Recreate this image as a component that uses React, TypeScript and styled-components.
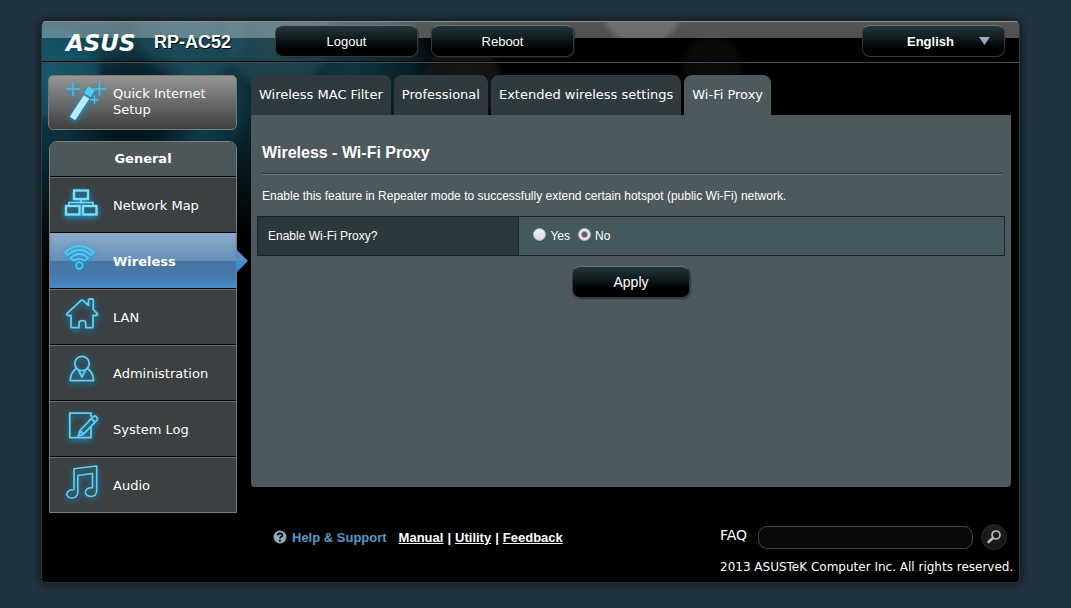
import React, { useState } from "react";
import styled, { createGlobalStyle, css } from "styled-components";

const sans = `"Liberation Sans", Arial, sans-serif`;
const wide = `"DejaVu Sans", Verdana, sans-serif`;

const GlobalStyle = createGlobalStyle`
  * { box-sizing: border-box; }
  body {
    margin: 0;
    min-height: 100vh;
    background: #21333e;
    color: #fff;
    font-family: ${sans};
    font-size: 12px;
  }
  a { color: inherit; }
  button, input, select { font-family: inherit; color: inherit; }
`;

const Page = styled.div`
  padding: 21px 51px 25px 41px;
`;

const Frame = styled.div`
  border: 1px solid #30393e;
  border-top-color: #8b9092;
  border-radius: 5px;
  overflow: hidden;
  box-shadow: 0 0 10px 1px #0c151b;
  background:
    radial-gradient(circle at 10px 50px, rgba(26, 98, 118, 0.75) 0, rgba(20, 84, 102, 0.7) 42px, transparent 52px),
    radial-gradient(circle at 90px 92px, rgba(4, 14, 20, 0.85) 0, rgba(4, 14, 20, 0.7) 34px, transparent 70px),
    radial-gradient(circle at 150px 4px, rgba(40, 92, 106, 0.6) 0, rgba(34, 84, 98, 0.5) 50px, transparent 60px),
    radial-gradient(circle at 235px 14px, rgba(52, 92, 100, 0.6) 0, rgba(36, 80, 90, 0.55) 48px, transparent 58px),
    radial-gradient(circle at 150px 84px, rgba(20, 80, 96, 0.7) 0, rgba(14, 60, 72, 0.5) 50px, transparent 62px),
    radial-gradient(circle at 310px 50px, rgba(20, 64, 78, 0.7) 0, rgba(14, 50, 62, 0.5) 60px, transparent 84px),
    radial-gradient(circle at 420px 62px, #181818 0, #121212 36px, transparent 44px),
    radial-gradient(circle at 670px 44px, #0d0d0d 0, #090909 26px, transparent 34px),
    radial-gradient(ellipse 400px 240px at 20px 0, #12414f 0, #0c303b 50%, transparent 100%),
    #000;
`;

const Header = styled.header`
  display: flex;
  align-items: center;
  height: 41px;
  padding: 0 14px 2px 24px;
  border-bottom: 1px solid #3d4c55;
  box-shadow: inset 0 -1px #05090b;
  background:
    radial-gradient(circle at 600px -16px, rgba(255, 255, 255, 0.16) 0 36px, transparent 44px) 0 0 / 100% 16px no-repeat,
    linear-gradient(rgba(255, 255, 255, 0.33), rgba(255, 255, 255, 0.31)) 0 0 / 100% 16px no-repeat;
`;

const Brand = styled.span`
  width: 88px;
  padding-top: 3px;
  font: italic bold 23px/24px ${wide};
  color: #fff;
`;

const Model = styled.h1`
  width: 121px;
  margin: 0;
  padding-top: 2px;
  font-size: 18px;
  line-height: 24px;
  text-shadow: 1px 1px 0 #000;
`;

const glossy = css`
  border: 1px solid #333b3e;
  border-top-color: #6b7376;
  border-radius: 8px;
  background: linear-gradient(#23353b 0, #152328 30%, #000 75%);
  box-shadow: 1px 1px 1px rgba(30, 38, 40, 0.6);
  color: #fff;
`;

const PushButton = styled.button<{ $size?: "small" | "large" }>`
  ${glossy}
  width: ${(p) => (p.$size === "small" ? 118 : 143)}px;
  height: 32px;
  padding: 0;
  font-size: ${(p) => (p.$size === "small" ? 14 : 13)}px;
  cursor: pointer;
`;

const HeaderActions = styled.div`
  display: flex;
  flex: 1;
  gap: 13px;
`;

const Language = styled.label`
  position: relative;
  display: block;
`;

const LanguageSelect = styled.select`
  ${glossy}
  appearance: none;
  width: 143px;
  height: 32px;
  padding: 0 40px 0 44px;
  box-shadow: none;
  font-size: 13px;
  font-weight: bold;
`;

const LanguageArrow = styled.svg`
  position: absolute;
  right: 15px;
  top: 12px;
  pointer-events: none;
`;

const Body = styled.div`
  display: flex;
  align-items: flex-start;
  gap: 14px;
  padding: 12px 8px 0 6px;
`;

const Sidebar = styled.aside`
  width: 189px;
  flex: none;
`;

const QuickSetup = styled.a`
  display: flex;
  align-items: center;
  gap: 7px;
  height: 55px;
  margin-bottom: 11px;
  padding: 0 0 2px 13px;
  border: 1px solid #777;
  border-radius: 5px;
  background: linear-gradient(#969696, #6a6a6a 50%, #3f3f3f);
  font: 13px/16px ${wide};
  text-decoration: none;
`;

const Menu = styled.nav`
  margin-left: 1px;
  border: 1px solid #7b7f80;
  border-radius: 8px 8px 0 0;
`;

const MenuTitle = styled.h2`
  margin: 0;
  height: 34px;
  border-radius: 7px 7px 0 0;
  background: #4d5659;
  font: bold 13px/34px ${wide};
  text-align: center;
`;

const MenuItem = styled.a<{ $active?: boolean }>`
  position: relative;
  display: flex;
  align-items: center;
  gap: 11px;
  height: 56px;
  padding: 2px 0 0 12px;
  border-top: 1px solid #000;
  background: #3b4042;
  box-shadow: inset 0 1px #696d6e;
  font: 13px/16px ${wide};
  text-decoration: none;
  ${(p) =>
    p.$active &&
    css`
      font-weight: bold;
      background: linear-gradient(#8dabc9, #6690b9 50%, #4674a2 50%, #4b7bad);
      box-shadow: inset 0 -10px 10px -5px #4290d0;
      &::after {
        content: "";
        position: absolute;
        left: 100%;
        top: 16px;
        width: 12px;
        height: 24px;
        background: linear-gradient(#5d8fc0 50%, #3f8dce 50%);
        clip-path: polygon(0 0, 100% 50%, 0 100%);
      }
    `}
`;

const GlowIcon = styled.svg`
  flex: none;
  fill: none;
  stroke: #5fd0f2;
  stroke-width: 1.8;
  stroke-linejoin: round;
  stroke-linecap: round;
  filter: drop-shadow(0 2px 3px #0f9ad6);
`;

const Main = styled.main`
  flex: 1;
  min-width: 0;
`;

const Tabs = styled.nav`
  display: flex;
  gap: 3px;
`;

const Tab = styled.a<{ $active?: boolean }>`
  height: 40px;
  padding: 0 8px;
  border-radius: 8px 8px 0 0;
  background: ${(p) => (p.$active ? "#4d595d" : "#2f3a3e")};
  font: 13px/39px ${wide};
  text-decoration: none;
  white-space: nowrap;
`;

const Panel = styled.section`
  min-height: 372px;
  padding: 28px 6px;
  border-radius: 0 0 4px 4px;
  background: #4d595d;
`;

const PanelTitle = styled.h2`
  margin: 0 3px 0 5px;
  padding-bottom: 11px;
  border-bottom: 1px solid #2f3a3e;
  box-shadow: 0 1px #6c7e84;
  font-size: 16px;
  line-height: 19px;
`;

const Note = styled.p`
  margin: 14px 5px 12px;
  line-height: 16px;
`;

const Settings = styled.table`
  width: 100%;
  height: 40px;
  border-collapse: collapse;
  th,
  td {
    padding: 0 10px;
    border: 1px solid #1d2426;
    text-align: left;
    font-weight: normal;
  }
  th {
    width: 35%;
    background: #2d383d;
  }
  td {
    padding-left: 14px;
    background: #44585d;
  }
`;

const RadioGroup = styled.div`
  display: flex;
  gap: 8px;
`;

const RadioLabel = styled.label`
  display: flex;
  align-items: center;
  gap: 4px;
`;

const Radio = styled.input`
  appearance: none;
  width: 13px;
  height: 13px;
  margin: 0 0 4px;
  border: 1px solid #b0b0b0;
  border-radius: 50%;
  background: linear-gradient(#f2f2f2, #d9d9d9);
  &:checked {
    background: radial-gradient(circle, #5a5a5a 0 2px, #e6e6e6 4px);
  }
`;

const Actions = styled.div`
  display: flex;
  justify-content: center;
  padding-top: 10px;
`;

const Footer = styled.footer`
  display: flex;
  justify-content: space-between;
  padding: 11px 12px 7px 231px;
`;

const Support = styled.div`
  display: flex;
  align-items: center;
  height: 26px;
  font-size: 13px;
  font-weight: bold;
`;

const SupportTitle = styled.span`
  margin: 0 12px 0 5px;
  color: #569ac7;
`;

const SupportLinks = styled.span`
  display: flex;
  gap: 4px;
`;

const Legal = styled.div`
  width: 287px;
`;

const Search = styled.form`
  display: flex;
  align-items: center;
  height: 26px;
`;

const SearchLabel = styled.label`
  flex: 1;
  padding-bottom: 4px;
  font: 14px/16px ${wide};
`;

const SearchInput = styled.input`
  width: 215px;
  height: 23px;
  margin-right: 8px;
  padding: 0 10px;
  border: 1px solid #444;
  border-radius: 9px;
  background: #090909;
`;

const SearchButton = styled.button`
  display: grid;
  place-items: center;
  width: 26px;
  height: 26px;
  padding: 0;
  border: 1px solid #292929;
  border-radius: 50%;
  background: linear-gradient(#202020, #151515);
`;

const Copyright = styled.p`
  margin: 9px 0 0;
  font: 12px/16px ${wide};
  white-space: nowrap;
`;

const icons: Record<string, React.ReactNode> = {
  "Network Map": (
    <g strokeWidth="2.4" strokeLinejoin="miter" stroke="#7fdcf5" fill="#23647c">
      <path d="M19 15v4M7 21v-2.500h24V21" strokeWidth="1.600" fill="none" />
      <rect x="12" y="6.500" width="14" height="8.500" />
      <rect x="4" y="22" width="13.500" height="8.500" />
      <rect x="21" y="22" width="13.500" height="8.500" />
    </g>
  ),
  Wireless: (
    <g strokeWidth="1.700" stroke="#4fcaf3">
      <path d="M3 12.500Q17.300 -0.500 31.700 12.500L29 15Q17.300 5 5.500 15Z" />
      <path d="M8.500 18Q17.300 10 26.200 18L22.500 20.800Q17.300 16.800 12 20.800Z" />
      <circle cx="17.300" cy="25.500" r="3.300" />
    </g>
  ),
  LAN: (
    <path d="M9 19.500H6Q4 19 5.200 17.300L18.500 4.800Q20 3.400 21.500 4.800L26.500 9.300V4Q26.800 3 28 3H30Q31.300 3 31.300 4.200V13.600L35.200 17.300Q36.300 19 34.300 19.500H31V30Q31 31.700 29.500 31.700H23.700V27Q23.700 24.700 20.300 24.700T17 27V31.700H10.500Q9 31.700 9 30Z" />
  ),
  Administration: (
    <g>
      <circle cx="20" cy="11.500" r="7.200" />
      <path d="M14.500 16.500Q8.300 20.500 8.300 28.700H31.500Q31.500 20.500 25.500 16.500M16.500 18L19.900 25L23.500 18" />
    </g>
  ),
  "System Log": (
    <g strokeLinejoin="miter">
      <path d="M29 8V5.200H7.800V29.600H29V19" />
      <path d="M16.500 27.800L18 22.500L31.500 8.500Q32.700 7.500 34 8.500L35.300 10Q36 11.200 35 12.200L21.500 26.200ZM18 22.500L21.500 26.200M29.500 10.700L33 14.200" />
    </g>
  ),
  Audio: (
    <path
      strokeWidth="1.600"
      d="M12 24.500V4.700L34.700 2V26.500Q34.500 32.500 28.800 32.500Q23.500 32 23.300 28Q24 23.300 30.500 23.800V9.500L15.800 11.500V28Q15.500 34 9.500 34Q5 33.500 4.800 30Q5.500 25.500 12 25.700"
    />
  ),
};

const menuItems = ["Network Map", "Wireless", "LAN", "Administration", "System Log", "Audio"];
const tabs = ["Wireless MAC Filter", "Professional", "Extended wireless settings", "Wi-Fi Proxy"];

export default function App() {
  const [proxy, setProxy] = useState("No");

  return (
    <>
      <GlobalStyle />
      <Page>
        <Frame>
          <Header>
            <Brand>ASUS</Brand>
            <Model>RP-AC52</Model>
            <HeaderActions>
              <PushButton type="button">Logout</PushButton>
              <PushButton type="button">Reboot</PushButton>
            </HeaderActions>
            <Language>
              <LanguageSelect aria-label="Language" defaultValue="English">
                <option>English</option>
              </LanguageSelect>
              <LanguageArrow width="11" height="8" viewBox="0 0 11 8" aria-hidden="true">
                <path d="M0 0H11L5.500 8Z" fill="#93adbf" />
              </LanguageArrow>
            </Language>
          </Header>

          <Body>
            <Sidebar>
              <QuickSetup href="#setup">
                <GlowIcon width="44" height="44" viewBox="0 0 44 44" aria-hidden="true">
                  <path d="M11 2.500V15.500M4.500 9H17.500M37.500 2.500V15M31 9H43.500M32.500 16V23.500M28.700 19.700H36" stroke="#45c3ec" strokeWidth="1.400" />
                  <path d="M24.500 17L10.500 38.500" stroke="#b5ecfb" strokeWidth="6.500" strokeLinecap="butt" />
                  <path d="M29.500 8.500L25.500 15" stroke="#4fd0f7" strokeWidth="7.500" strokeLinecap="butt" />
                </GlowIcon>
                <span>
                  Quick Internet
                  <br />
                  Setup
                </span>
              </QuickSetup>
              <Menu aria-label="General">
                <MenuTitle>General</MenuTitle>
                {menuItems.map((name) => (
                  <MenuItem key={name} href={`#${name}`} $active={name === "Wireless"}>
                    <GlowIcon width="40" height="44" viewBox="0 0 40 44" aria-hidden="true">
                      {icons[name]}
                    </GlowIcon>
                    {name}
                  </MenuItem>
                ))}
              </Menu>
            </Sidebar>

            <Main>
              <Tabs aria-label="Wireless pages">
                {tabs.map((name) => (
                  <Tab key={name} href={`#${name}`} $active={name === "Wi-Fi Proxy"}>
                    {name}
                  </Tab>
                ))}
              </Tabs>
              <Panel>
                <PanelTitle>Wireless - Wi-Fi Proxy</PanelTitle>
                <Note>
                  Enable this feature in Repeater mode to successfully extend certain hotspot (public Wi-Fi) network.
                </Note>
                <Settings>
                  <tbody>
                    <tr>
                      <th scope="row">Enable Wi-Fi Proxy?</th>
                      <td>
                        <RadioGroup role="radiogroup" aria-label="Enable Wi-Fi Proxy?">
                          {["Yes", "No"].map((value) => (
                            <RadioLabel key={value}>
                              <Radio
                                type="radio"
                                name="proxy"
                                value={value}
                                checked={proxy === value}
                                onChange={() => setProxy(value)}
                              />
                              {value}
                            </RadioLabel>
                          ))}
                        </RadioGroup>
                      </td>
                    </tr>
                  </tbody>
                </Settings>
                <Actions>
                  <PushButton type="button" $size="small">
                    Apply
                  </PushButton>
                </Actions>
              </Panel>
            </Main>
          </Body>

          <Footer>
            <Support>
              <svg width="14" height="14" viewBox="0 0 14 14" aria-hidden="true">
                <circle cx="7" cy="7" r="6.500" fill="#8cabb9" />
                <path d="M4.500 5.300Q4.800 3.300 7 3.300Q9.500 3.400 9.400 5.200Q9.300 6.400 7.900 7Q7 7.500 7 8.600" fill="none" stroke="#000" strokeWidth="1.700" />
                <circle cx="7" cy="10.700" r="1" fill="#000" />
              </svg>
              <SupportTitle>Help &amp; Support</SupportTitle>
              <SupportLinks>
                <a href="#manual">Manual</a>|<a href="#utility">Utility</a>|<a href="#feedback">Feedback</a>
              </SupportLinks>
            </Support>
            <Legal>
              <Search onSubmit={(e) => e.preventDefault()}>
                <SearchLabel htmlFor="faq">FAQ</SearchLabel>
                <SearchInput id="faq" type="text" />
                <SearchButton type="submit" aria-label="Search">
                  <svg width="16" height="16" viewBox="0 0 16 16" fill="none" stroke="#b9b9b9" aria-hidden="true">
                    <circle cx="10" cy="6" r="4" strokeWidth="1.700" />
                    <path d="M7 9L2.500 13" strokeWidth="2.600" strokeLinecap="round" />
                  </svg>
                </SearchButton>
              </Search>
              <Copyright>2013 ASUSTeK Computer Inc. All rights reserved.</Copyright>
            </Legal>
          </Footer>
        </Frame>
      </Page>
    </>
  );
}
